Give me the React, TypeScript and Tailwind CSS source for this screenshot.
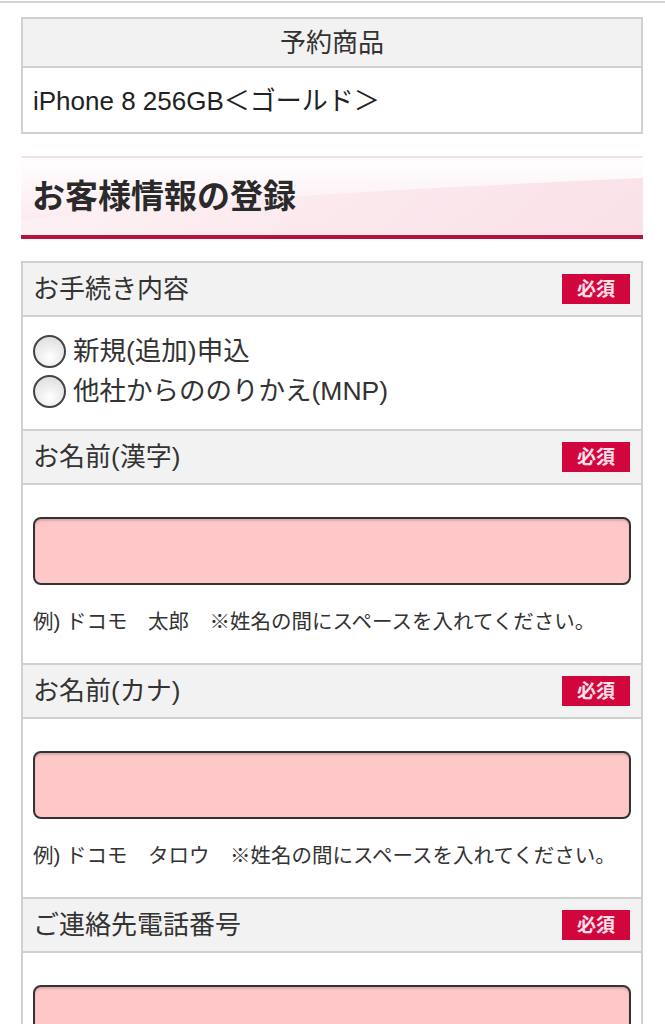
import React from "react";

const FONT = { fontFamily: '"Liberation Sans", "Noto Sans CJK JP", sans-serif' };

function Badge() {
  return (
    <span className="flex h-[30px] w-[68px] items-center justify-center bg-[#d1063d] text-[19px] font-bold leading-none text-[#ffe0e8]">
      必須
    </span>
  );
}

function FieldHeader({ label }: { label: string }) {
  return (
    <div className="flex h-[54px] items-center justify-between border-b-2 border-[#d0d0d0] bg-[#f2f2f2] pl-[10px] pr-[11px]">
      <span className="text-[26px] leading-none text-[#333]">{label}</span>
      <Badge />
    </div>
  );
}

function Radio({ label }: { label: string }) {
  return (
    <div className="flex items-center gap-[7px]">
      <span className="h-[33px] w-[33px] rounded-full border-2 border-[#444] bg-[radial-gradient(circle_at_50%_70%,#ffffff,#d8d8d8)]" />
      <span className="text-[26.5px] leading-none text-[#333]">{label}</span>
    </div>
  );
}

function InputBlock({ hint, last }: { hint?: string; last?: boolean }) {
  return (
    <div className={"px-[10px] pt-[32px] " + (last ? "" : "border-b-2 border-[#d0d0d0] pb-[29px]")}>
      <div className="h-[68px] w-full rounded-[8px] border-2 border-[#333] bg-[#ffc8c8] shadow-[inset_0_2px_2px_rgba(0,0,0,0.15)]" />
      {hint && <p className="mt-[25px] text-[20.5px] leading-[24px] text-[#333]">{hint}</p>}
    </div>
  );
}

export default function App() {
  return (
    <div className="min-h-[1024px] w-[665px] bg-white" style={FONT}>
      <div className="pt-[1px]">
        <div className="h-[2px] bg-[#d4d4d4]" />
      </div>

      <div className="ml-[21px] mr-[22px] mt-[14px] border-2 border-[#d0d0d0]">
        <div className="flex h-[49px] items-center justify-center border-b-2 border-[#d0d0d0] bg-[#f2f2f2] text-[26px] leading-none text-[#333]">
          予約商品
        </div>
        <div className="flex h-[64px] items-center pl-[10px] pt-[2px] text-[26px] leading-none text-[#222]">
          iPhone 8 256GB＜ゴールド＞
        </div>
      </div>

      <div className="relative ml-[21px] mr-[22px] mt-[22px] h-[83px] overflow-hidden border-t-2 border-[#f7dfe5] border-b-[4px] border-b-[#b5123f]">
        <svg className="absolute inset-0 h-full w-full" viewBox="0 0 622 77" preserveAspectRatio="none">
          <defs>
            <linearGradient id="g1" x1="0" y1="0" x2="0" y2="1">
              <stop offset="0" stopColor="#fff" />
              <stop offset="1" stopColor="#fbe6ec" />
            </linearGradient>
            <linearGradient id="g2" x1="0" y1="0" x2="1" y2="0">
              <stop offset="0" stopColor="#fdf1f4" />
              <stop offset="1" stopColor="#f9e0e7" />
            </linearGradient>
          </defs>
          <rect x="0" y="0" width="622" height="77" fill="url(#g1)" />
          <path d="M0 62 C 200 40, 400 30, 622 20 L622 77 L0 77 Z" fill="url(#g2)" opacity="0.9" />
        </svg>
        <h2 className="relative pl-[11px] pt-[17px] text-[33px] font-bold leading-[44px] text-[#2a2a2a]">お客様情報の登録</h2>
      </div>

      <div className="ml-[21px] mr-[22px] mt-[22px] border-x-2 border-t-2 border-[#d0d0d0]">
        <FieldHeader label="お手続き内容" />
        <div className="flex h-[114px] flex-col justify-center gap-[7px] border-b-2 border-[#d0d0d0] pl-[10px] pb-[4px]">
          <Radio label="新規(追加)申込" />
          <Radio label="他社からののりかえ(MNP)" />
        </div>
        <FieldHeader label="お名前(漢字)" />
        <InputBlock hint="例) ドコモ　太郎　※姓名の間にスペースを入れてください。" />
        <FieldHeader label="お名前(カナ)" />
        <InputBlock hint="例) ドコモ　タロウ　※姓名の間にスペースを入れてください。" />
        <FieldHeader label="ご連絡先電話番号" />
        <InputBlock last />
      </div>
    </div>
  );
}
